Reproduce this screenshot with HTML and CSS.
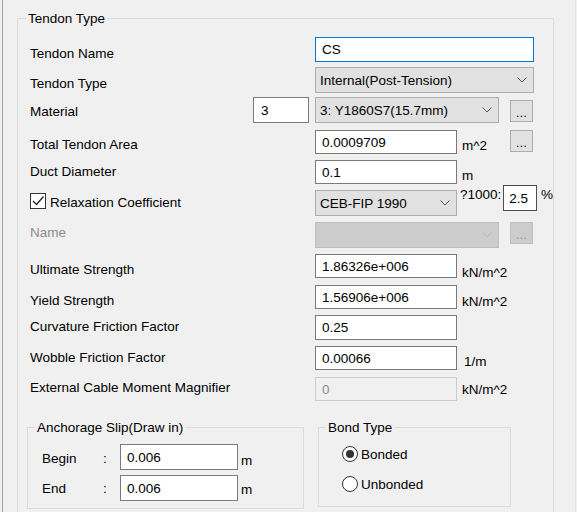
FILE: index.html
```html
<!DOCTYPE html>
<html>
<head>
<meta charset="utf-8">
<link rel="stylesheet" href="styles.css">
</head>
<body>
<div class="window">
  <fieldset class="group main">
    <legend>Tendon Type</legend>

    <div class="row h30">
      <span class="lbl o10">Tendon Name</span>
      <div class="tb focus c35 t25">CS</div>
    </div>

    <div class="row h30">
      <span class="lbl o10">Tendon Type</span>
      <div class="combo c35 t26"><span>Internal(Post-Tension)</span><svg class="chev" width="10" height="6" viewBox="0 0 10 6"><path d="M0.5 0.5 L5 5 L9.5 0.5" fill="none" stroke="#555" stroke-width="1"/></svg></div>
    </div>

    <div class="row h33">
      <span class="lbl o7">Material</span>
      <div class="tb c2 w56 t26 small">3</div>
      <div class="combo c34 w184 t26"><span>3: Y1860S7(15.7mm)</span><svg class="chev" width="10" height="6" viewBox="0 0 10 6"><path d="M0.5 0.5 L5 5 L9.5 0.5" fill="none" stroke="#555" stroke-width="1"/></svg></div>
      <div class="btn c5 mt3">...</div>
    </div>

    <div class="row h30">
      <span class="lbl o7">Total Tendon Area</span>
      <div class="tb c3 w142">0.0009709</div>
      <span class="unit c4 u8">m^2</span>
      <div class="btn c5">...</div>
    </div>

    <div class="row h30">
      <span class="lbl o4">Duct Diameter</span>
      <div class="tb c3 w142">0.1</div>
      <span class="unit c4 u8">m</span>
    </div>

    <div class="row h32">
      <label class="chkwrap">
        <span class="chk"><svg width="14" height="14" viewBox="0 0 14 14"><path d="M2 7 L5.5 10.5 L12.5 2.5" fill="none" stroke="#222" stroke-width="1.3"/></svg></span>
        <span class="chklbl">Relaxation Coefficient</span>
      </label>
      <div class="combo c3 w142 t25"><span>CEB-FIP 1990</span><svg class="chev" width="10" height="6" viewBox="0 0 10 6"><path d="M0.5 0.5 L5 5 L9.5 0.5" fill="none" stroke="#555" stroke-width="1"/></svg></div>
      <div class="relax">
        <span class="rl">?1000:</span>
        <div class="tb w36 t26 focus2">2.5</div>
        <span class="pct">%</span>
      </div>
    </div>

    <div class="row h32">
      <span class="lbl dis o3">Name</span>
      <div class="combo disabled c34 w184 t25"><span></span><svg class="chev" width="10" height="6" viewBox="0 0 10 6"><path d="M0.5 0.5 L5 5 L9.5 0.5" fill="none" stroke="#bdbdbd" stroke-width="1"/></svg></div>
      <div class="btn disabled c5 t25">...</div>
    </div>

    <div class="row h31">
      <span class="lbl o8">Ultimate Strength</span>
      <div class="tb c3 w142">1.86326e+006</div>
      <span class="unit c4 u11">kN/m^2</span>
    </div>

    <div class="row h30">
      <span class="lbl o8">Yield Strength</span>
      <div class="tb c3 w142">1.56906e+006</div>
      <span class="unit c4 u9">kN/m^2</span>
    </div>

    <div class="row h31">
      <span class="lbl o4">Curvature Friction Factor</span>
      <div class="tb c3 w142 t25">0.25</div>
    </div>

    <div class="row h31">
      <span class="lbl o4">Wobble Friction Factor</span>
      <div class="tb c3 w142">0.00066</div>
      <span class="unit c4 u8 ml2">1/m</span>
    </div>

    <div class="row h24">
      <span class="lbl o3">External Cable Moment Magnifier</span>
      <div class="tb disabled c3 w142">0</div>
      <span class="unit c4 u5">kN/m^2</span>
    </div>

    <div class="bottom">
      <fieldset class="group anchor">
        <legend>Anchorage Slip(Draw in)</legend>
        <div class="arow h31">
          <span class="o7">Begin</span>
          <span class="o7">:</span>
          <div class="tb t26">0.006</div>
          <span class="am o9">m</span>
        </div>
        <div class="arow h26">
          <span class="o6">End</span>
          <span class="o6">:</span>
          <div class="tb t26">0.006</div>
          <span class="am o7">m</span>
        </div>
      </fieldset>

      <fieldset class="group bond">
        <legend>Bond Type</legend>
        <div class="radio">
          <span class="rb on"></span>
          <span class="rlbl">Bonded</span>
        </div>
        <div class="radio">
          <span class="rb"></span>
          <span class="rlbl">Unbonded</span>
        </div>
      </fieldset>
    </div>
  </fieldset>
</div>
</body>
</html>
```

FILE: styles.css
```css
* { box-sizing: border-box; }

html, body {
  margin: 0;
  height: 512px;
  overflow: hidden;
  background: #f0f0f0;
}

body {
  font-family: "Liberation Sans", Arial, sans-serif;
  font-size: 13.5px;
  line-height: 15px;
  color: #000;
}

.window {
  margin-left: 2px;
  width: 574px;
  height: 512px;
  border-left: 1px solid #a0a0a0;
  border-right: 1px solid #e3e3e3;
  overflow: hidden;
}

.group {
  border: 1px solid #dcdcdc;
  margin: 0;
  min-width: 0;
}

.group legend {
  padding: 0 2px;
  line-height: 15px;
}

.main {
  margin: 11px 0 0 14px;
  width: 537px;
  padding: 11px 0 30px 12px;
}

.main > legend { margin-left: -4px; }

.row {
  display: grid;
  grid-template-columns: 223px 62px 147px 48px 24px 1fr;
  align-items: start;
}

.h24 { height: 24px; }
.h26 { height: 26px; }
.h30 { height: 30px; }
.h31 { height: 31px; }
.h32 { height: 32px; }
.h33 { height: 33px; }

.lbl { grid-column: 1; white-space: nowrap; }
.dis { color: #8d8d8d; }

.o3 { margin-top: 3px; }
.o4 { margin-top: 4px; }
.o6 { margin-top: 6px; }
.o7 { margin-top: 7px; }
.o8 { margin-top: 8px; }
.o9 { margin-top: 9px; }
.o10 { margin-top: 9px; }

.u5 { margin-top: 5px; }
.u8 { margin-top: 8px; }
.u9 { margin-top: 9px; }
.u11 { margin-top: 11px; }
.ml2 { margin-left: 2px; }
.mt3 { margin-top: 3px; }

.c2 { grid-column: 2; }
.c3 { grid-column: 3; }
.c34 { grid-column: 3 / 5; }
.c35 { grid-column: 3 / 6; }
.c4 { grid-column: 4; }
.c5 { grid-column: 5; }

.w36 { width: 36px; }
.w56 { width: 56px; }
.w142 { width: 142px; }
.w184 { width: 184px; }

.tb {
  height: 24px;
  border: 1px solid #7a7a7a;
  background: #fff;
  padding: 0 6px;
  display: flex;
  align-items: center;
  white-space: nowrap;
}

.t25 { height: 25px; }
.t26 { height: 26px; }

.tb.small { padding-left: 7px; }
.tb.focus { border-color: #0078d7; }
.tb.focus2 { border-color: #4d4d4d; padding-left: 5px; }
.tb.disabled {
  background: #f0f0f0;
  border-color: #cccccc;
  color: #8d8d8d;
}

.combo {
  height: 26px;
  border: 1px solid #adadad;
  background: #e1e1e1;
  padding: 0 6px 0 4px;
  display: flex;
  align-items: center;
  justify-content: space-between;
  white-space: nowrap;
}

.combo.disabled {
  background: #cccccc;
  border-color: #bfbfbf;
}

.chev { display: block; flex: none; }

.btn {
  width: 23px;
  height: 22px;
  border: 1px solid #adadad;
  background: #e1e1e1;
  display: flex;
  justify-content: center;
  align-items: flex-end;
  padding-bottom: 2px;
  color: #222;
  line-height: 13px;
}

.btn.disabled {
  background: #cccccc;
  border-color: #bfbfbf;
  color: #9a9a9a;
}

.unit { white-space: nowrap; }

.chkwrap {
  grid-column: 1;
  display: flex;
  align-items: flex-start;
  margin-top: 3px;
}

.chk {
  width: 16px;
  height: 16px;
  border: 1px solid #333;
  background: #fff;
  display: flex;
  align-items: center;
  justify-content: center;
}

.chk svg { display: block; }

.chklbl { margin: 2px 0 0 4px; white-space: nowrap; }

.relax {
  grid-column: 4 / 7;
  display: flex;
  align-items: flex-start;
  margin: -5px 0 0 -2px;
}

.rl { width: 48px; margin-top: 2px; }
.pct { margin: 2px 0 0 4px; }

.bottom {
  display: flex;
  align-items: flex-start;
  gap: 14px;
  margin: 19px 0 0 -3px;
}

.anchor {
  width: 277px;
  padding: 9px 0 7px 14px;
}

.anchor > legend { margin-left: -7px; }

.arow {
  display: grid;
  grid-template-columns: 61px 17px 118px auto;
  align-items: start;
}

.am { margin-left: 3px; }

.bond {
  width: 193px;
  padding: 11px 0 0 23px;
}

.bond > legend { margin-left: -16px; }

.radio {
  display: flex;
  align-items: flex-start;
  height: 30px;
}

.rb {
  width: 16px;
  height: 16px;
  border: 1px solid #333;
  border-radius: 50%;
  background: #fff;
  display: flex;
  align-items: center;
  justify-content: center;
}

.rb.on::after {
  content: "";
  width: 8px;
  height: 8px;
  border-radius: 50%;
  background: #333;
}

.rlbl { margin: 1px 0 0 3px; }
```
